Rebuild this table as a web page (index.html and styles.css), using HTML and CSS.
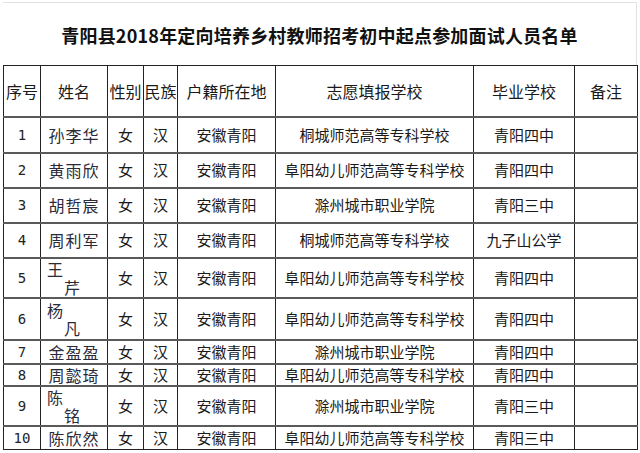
FILE: index.html
```html
<!DOCTYPE html>
<html lang="zh">
<head>
<meta charset="utf-8">
<link rel="stylesheet" href="styles.css">
</head>
<body>
<div class="page">
  <div class="title-box">
    <h1 class="title">青阳县2018年定向培养乡村教师招考初中起点参加面试人员名单</h1>
  </div>
  <table class="list">
    <colgroup>
      <col class="c-no"><col class="c-name"><col class="c-sex"><col class="c-eth"><col class="c-home"><col class="c-wish"><col class="c-grad"><col class="c-note">
    </colgroup>
    <thead>
      <tr class="r-head">
        <th>序号</th><th>姓名</th><th>性别</th><th>民族</th><th>户籍所在地</th><th>志愿填报学校</th><th>毕业学校</th><th>备注</th>
      </tr>
    </thead>
    <tbody>
      <tr class="r36"><td class="no">1</td><td class="name">孙李华</td><td>女</td><td>汉</td><td>安徽青阳</td><td>桐城师范高等专科学校</td><td>青阳四中</td><td></td></tr>
      <tr class="r35"><td class="no">2</td><td class="name">黄雨欣</td><td>女</td><td>汉</td><td>安徽青阳</td><td>阜阳幼儿师范高等专科学校</td><td>青阳四中</td><td></td></tr>
      <tr class="r35"><td class="no">3</td><td class="name">胡哲宸</td><td>女</td><td>汉</td><td>安徽青阳</td><td>滁州城市职业学院</td><td>青阳三中</td><td></td></tr>
      <tr class="r35"><td class="no">4</td><td class="name">周利军</td><td>女</td><td>汉</td><td>安徽青阳</td><td>桐城师范高等专科学校</td><td>九子山公学</td><td></td></tr>
      <tr class="r40"><td class="no">5</td><td class="name split"><span class="first">王</span><span class="second">芹</span></td><td>女</td><td>汉</td><td>安徽青阳</td><td>阜阳幼儿师范高等专科学校</td><td>青阳四中</td><td></td></tr>
      <tr class="r42"><td class="no">6</td><td class="name split"><span class="first">杨</span><span class="second">凡</span></td><td>女</td><td>汉</td><td>安徽青阳</td><td>阜阳幼儿师范高等专科学校</td><td>青阳四中</td><td></td></tr>
      <tr class="r24"><td class="no">7</td><td class="name">金盈盈</td><td>女</td><td>汉</td><td>安徽青阳</td><td>滁州城市职业学院</td><td>青阳四中</td><td></td></tr>
      <tr class="r22"><td class="no">8</td><td class="name">周懿琦</td><td>女</td><td>汉</td><td>安徽青阳</td><td>阜阳幼儿师范高等专科学校</td><td>青阳四中</td><td></td></tr>
      <tr class="r40"><td class="no">9</td><td class="name split"><span class="first">陈</span><span class="second">铭</span></td><td>女</td><td>汉</td><td>安徽青阳</td><td>滁州城市职业学院</td><td>青阳三中</td><td></td></tr>
      <tr class="r24"><td class="no">10</td><td class="name">陈欣然</td><td>女</td><td>汉</td><td>安徽青阳</td><td>阜阳幼儿师范高等专科学校</td><td>青阳三中</td><td></td></tr>
    </tbody>
  </table>
</div>
</body>
</html>
```
FILE: styles.css
```css
html, body {
  margin: 0;
  padding: 0;
  background: #ffffff;
}

body {
  font-family: "Noto Sans CJK SC", "Noto Sans", sans-serif;
  color: #1a1a1a;
}

.page {
  width: 634px;
  padding: 0 3px;
}

.title-box {
  margin-top: 2px;
  height: 63px;
  border-top: 1px solid #e2e2e2;
  border-right: 1px solid #e2e2e2;
  box-sizing: border-box;
  display: flex;
  align-items: center;
  justify-content: center;
  padding-top: 2px;
}

.title {
  margin: 0;
  font-size: 18px;
  font-weight: 700;
  color: #111;
  letter-spacing: 0.2px;
  white-space: nowrap;
}

.list {
  width: 634px;
  border-collapse: collapse;
  table-layout: fixed;
}

.c-no { width: 37px; }
.c-name { width: 67px; }
.c-sex { width: 36px; }
.c-eth { width: 34px; }
.c-home { width: 98px; }
.c-wish { width: 198px; }
.c-grad { width: 101px; }
.c-note { width: 63px; }

.list th,
.list td {
  padding: 0;
  text-align: center;
  vertical-align: middle;
  border-left: 1px solid #222;
  border-right: 1px solid #222;
  border-top: 2px solid #5a5a5a;
  border-bottom: 2px solid #5a5a5a;
  font-size: 15px;
  font-weight: 400;
  line-height: 18px;
  white-space: nowrap;
  overflow: hidden;
}

.list thead th {
  border-top: 1px solid #222;
  font-size: 16px;
}

.list tbody tr:last-child td {
  border-bottom: 1px solid #222;
}

.r-head { height: 51px; }
.r36 { height: 36px; }
.r35 { height: 35px; }
.r40 { height: 40px; }
.r42 { height: 42px; }
.r24 { height: 24px; }
.r22 { height: 22px; }

.list td.no {
  font-family: "DejaVu Sans Mono", monospace;
  font-size: 14px;
  color: #222;
}

.list td.name {
  font-size: 16px;
  letter-spacing: 1px;
  color: #2a2a3a;
}

.list td.split {
  text-align: left;
  overflow: visible;
}

.split .first,
.split .second {
  display: block;
  line-height: 18px;
}

.split .first {
  padding-left: 6px;
}

.split .second {
  padding-left: 23px;
}
```
